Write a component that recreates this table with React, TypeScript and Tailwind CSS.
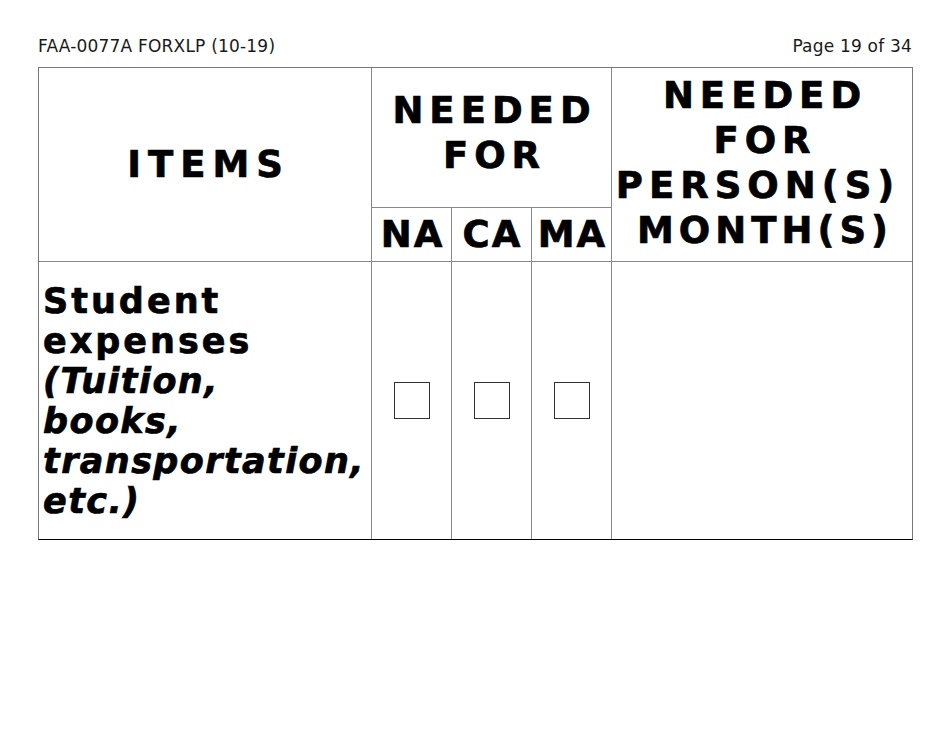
export default function App() {
  const boxes = ["NA", "CA", "MA"];

  return (
    <div className="w-[950px] h-[733px] bg-white font-['DejaVu_Sans',sans-serif] text-black">
      <div className="flex justify-between items-center pl-[38px] pr-[38px] pt-[33px] h-[58px] text-[17px] leading-[20px] tracking-[0.2px] text-[#1a1a1a]">
        <span>FAA-0077A FORXLP (10-19)</span>
        <span>Page 19 of 34</span>
      </div>

      <div className="ml-[38px] mt-[9px] w-[875px] border border-[#777] border-b-black grid grid-cols-[333px_80px_80px_80px_minmax(0,1fr)] grid-rows-[140px_54px_277px] [-webkit-text-stroke:0.7px_black]">
        {/* header */}
        <div className="row-span-2 border-r border-b border-[#888] flex items-center justify-center pl-[7px] text-[37px] font-bold tracking-[7px] leading-[45px]">
          ITEMS
        </div>
        <div className="col-span-3 border-r border-b border-[#888] flex items-center justify-center pl-[6px] text-center text-[37px] font-bold tracking-[6px] leading-[45px] pb-[10px]">
          NEEDED
          <br />
          FOR
        </div>
        <div className="row-span-2 border-b border-[#888] flex items-center justify-center pl-[6px] text-center text-[37px] font-bold tracking-[6px] leading-[45px] pb-[4px]">
          <div className="whitespace-nowrap">
            NEEDED
            <br />
            FOR
            <br />
            <span className="inline-block pr-[14px]">PERSON(S)</span>
            <br />
            <span className="tracking-[5px]">MONTH(S)</span>
          </div>
        </div>
        {boxes.map((b) => (
          <div
            key={b}
            className="border-r border-b border-[#888] flex items-center justify-center pl-[2px] text-[37px] font-bold tracking-[2px] leading-[45px]"
          >
            {b}
          </div>
        ))}

        {/* body row */}
        <div className="border-r border-[#888] flex items-center pl-[4px] text-[35px] font-bold tracking-[3px] leading-[40px]">
          <div>
            Student
            <br />
            expenses
            <br />
            <i className="tracking-[1.4px]">
              (Tuition,
              <br />
              books,
              <br />
              transportation,
              <br />
              etc.)
            </i>
          </div>
        </div>
        {boxes.map((b) => (
          <div key={b} className="border-r border-[#888] flex items-center justify-center">
            <div className="w-[36px] h-[37px] border-[1.5px] border-[#333]" />
          </div>
        ))}
        <div />
      </div>
    </div>
  );
}
